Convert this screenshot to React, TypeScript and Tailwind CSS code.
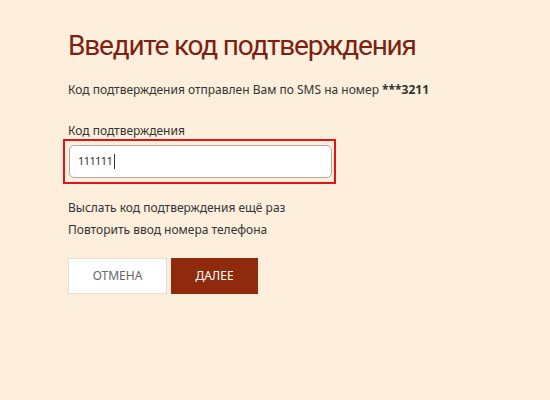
export default function App() {
  return (
    <div className="min-h-screen w-full bg-[#fdefdb] font-['Noto_Sans',sans-serif] text-[#333]">
      <div className="pl-[68px] pt-[24px]">
        <h1 className="font-['Roboto',sans-serif] text-[28px] leading-[44px] font-normal tracking-[-1.2px] text-[#7d1f12]">
          Введите код подтверждения
        </h1>
        <p className="mt-[14px] text-[12px] leading-[16px]">
          Код подтверждения отправлен Вам по SMS на номер <b>***3211</b>
        </p>

        <label className="mt-[25px] block text-[12px] leading-[16px]">Код подтверждения</label>
        <div className="-ml-[5px] w-[273px] border-2 border-[#e0141b] py-[4px] pl-[4px] pr-[2px]">
          <div className="flex h-[33px] items-center rounded-[5px] border border-[#b9a69c] bg-white pl-[8px] text-[11px] tracking-[-0.6px]">
            111111<span className="ml-[2px] h-[15px] w-px bg-[#333]" />
          </div>
        </div>

        <div className="mt-[16px] flex flex-col gap-[6px] text-[12px] leading-[16px]">
          <a className="cursor-pointer">Выслать код подтверждения ещё раз</a>
          <a className="cursor-pointer">Повторить ввод номера телефона</a>
        </div>

        <div className="mt-[20px] flex gap-[4px]">
          <button className="h-[36px] w-[99px] border border-[#e8ddd0] bg-white text-[12px] text-[#666]">
            ОТМЕНА
          </button>
          <button className="h-[36px] w-[87px] bg-[#8f2a0c] text-[12px] text-white">ДАЛЕЕ</button>
        </div>
      </div>
    </div>
  );
}
